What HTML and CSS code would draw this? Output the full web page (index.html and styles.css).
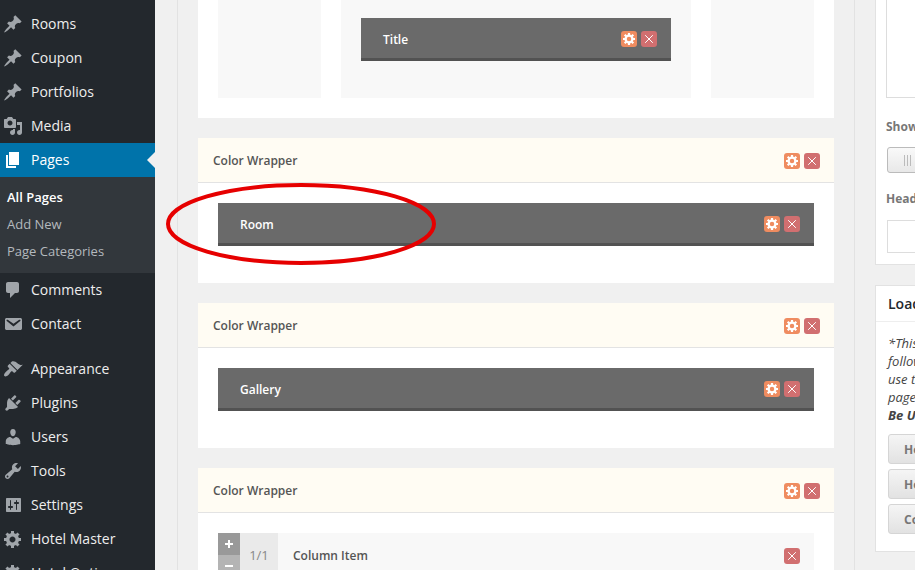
FILE: index.html
```html
<!DOCTYPE html>
<html lang="en">
<head>
<meta charset="utf-8">
<title>Pages</title>
<link rel="stylesheet" href="styles.css">
</head>
<body>
<svg class="defs" aria-hidden="true">
  <symbol id="pin" viewBox="0 0 20 20"><path d="M10.44 3.02l1.82-1.82 6.36 6.35-1.83 1.82c-1.05-.68-2.48-.57-3.41.36l-.75.75c-.92.93-1.04 2.35-.35 3.41l-1.83 1.82-2.41-2.41-2.8 2.79c-.42.42-3.38 2.71-3.8 2.29s1.86-3.39 2.28-3.81l2.79-2.79L4.1 9.36l1.83-1.82c1.05.69 2.48.57 3.4-.36l.75-.75c.93-.92 1.05-2.35.36-3.41z"/></symbol>
  <symbol id="media" viewBox="0 0 20 20"><path d="M13 11V4c0-.55-.45-1-1-1h-1.67L9 1H5L3.67 3H2c-.55 0-1 .45-1 1v7c0 .55.45 1 1 1h10c.55 0 1-.45 1-1zM7 4.5c1.38 0 2.5 1.12 2.5 2.5S8.38 9.5 7 9.5 4.5 8.38 4.5 7 5.62 4.5 7 4.5zM14 6h5v10.5c0 1.38-1.12 2.5-2.5 2.5S14 17.88 14 16.5s1.12-2.5 2.5-2.5c.17 0 .34.02.5.05V9h-3V6zm-4 8.05V13h2v3.5c0 1.38-1.12 2.5-2.5 2.5S7 17.88 7 16.5 8.12 14 9.5 14c.17 0 .34.02.5.05z"/></symbol>
  <symbol id="page" viewBox="0 0 20 20"><path d="M6 15V2h10v13H6zm-1 1h8v2H3V5h2v11z"/></symbol>
  <symbol id="comment" viewBox="0 0 20 20"><path d="M5 2h9c1.1 0 2 .9 2 2v7c0 1.1-.9 2-2 2h-2l-5 5v-5H5c-1.1 0-2-.9-2-2V4c0-1.1.9-2 2-2z"/></symbol>
  <symbol id="email" viewBox="0 0 20 20"><path d="M3.87 4h13.25C18.37 4 19 4.59 19 5.79v8.42c0 1.19-.63 1.79-1.88 1.79H3.87c-1.25 0-1.88-.6-1.88-1.79V5.79c0-1.2.63-1.79 1.88-1.79zm6.62 8.6l6.74-5.53c.24-.2.43-.66.13-1.07-.29-.41-.82-.42-1.17-.17l-5.7 3.86L4.8 5.83c-.35-.25-.88-.24-1.17.17-.3.41-.11.87.13 1.07z"/></symbol>
  <symbol id="brush" viewBox="0 0 20 20"><path d="M14.48 11.06L7.41 3.99l1.5-1.5c.5-.56 2.3-.47 3.51.32 1.21.8 1.43 1.28 2.91 2.1 1.18.64 2.45 1.26 4.45.85zm-.71.71L6.7 4.7 4.93 6.47c-.39.39-.39 1.02 0 1.41l1.06 1.06c.39.39.39 1.03 0 1.42-.6.6-1.43 1.11-2.21 1.69-.35.26-.7.53-1.01.84C1.43 14.23.4 16.08 1.4 17.07c.99 1 2.84-.03 4.18-1.36.31-.31.58-.66.85-1.02.57-.78 1.08-1.61 1.69-2.21.39-.39 1.02-.39 1.41 0l1.06 1.06c.39.39 1.02.39 1.41 0z"/></symbol>
  <symbol id="plug" viewBox="0 0 20 20"><path d="M13.11 4.36L9.87 7.6 8 5.73l3.24-3.24c.35-.34 1.05-.2 1.56.32.52.51.66 1.21.31 1.55zm-8 1.77l.91-1.12 9.01 9.01-1.19.84c-.71.71-2.63 1.16-3.82 1.16H6.14L4.9 17.26c-.59.59-1.54.59-2.12 0-.59-.58-.59-1.53 0-2.12l1.24-1.24v-3.88c0-1.13.4-3.19 1.09-3.89zm7.26 3.97l3.24-3.24c.34-.35 1.04-.21 1.55.31.52.51.66 1.21.31 1.55l-3.24 3.25z"/></symbol>
  <symbol id="user" viewBox="0 0 20 20"><path d="M10 9.25c-2.27 0-2.73-3.44-2.73-3.44C7 4.02 7.82 2 9.97 2c2.16 0 2.98 2.02 2.71 3.81 0 0-.41 3.44-2.68 3.44zm0 2.57L12.72 10c2.39 0 4.52 2.33 4.52 4.53v2.49s-3.65 1.13-7.24 1.13c-3.65 0-7.24-1.13-7.24-1.13v-2.49c0-2.25 1.94-4.48 4.47-4.48z"/></symbol>
  <symbol id="wrench" viewBox="0 0 20 20"><path d="M16.68 9.77c-1.34 1.34-3.3 1.67-4.95.99l-5.41 6.52c-.99.99-2.59.99-3.58 0s-.99-2.59 0-3.57l6.52-5.42c-.68-1.65-.35-3.61.99-4.95 1.28-1.28 3.12-1.62 4.72-1.06l-2.89 2.89 2.82 2.82 2.86-2.87c.53 1.58.18 3.39-1.08 4.65zM3.81 16.21c.4.39 1.04.39 1.43 0 .4-.4.4-1.04 0-1.43-.39-.4-1.03-.4-1.43 0-.39.39-.39 1.03 0 1.43z"/></symbol>
  <symbol id="sliders" viewBox="0 0 20 20"><path d="M18 16V4c0-.6-.4-1-1-1H4c-.6 0-1 .4-1 1v12c0 .6.4 1 1 1h13c.6 0 1-.4 1-1zM8 11h1c.55 0 1 .45 1 1s-.45 1-1 1H8v1.5c0 .28-.22.5-.5.5s-.5-.22-.5-.5V13H6c-.55 0-1-.45-1-1s.45-1 1-1h1V5.5c0-.28.22-.5.5-.5s.5.22.5.5V11zm5-2h-1c-.55 0-1-.45-1-1s.45-1 1-1h1V5.5c0-.28.22-.5.5-.5s.5.22.5.5V7h1c.55 0 1 .45 1 1s-.45 1-1 1h-1v5.5c0 .28-.22.5-.5.5s-.5-.22-.5-.5V9z"/></symbol>
  <symbol id="gear" viewBox="0 0 20 20"><path d="M18 12h-2.18c-.17.7-.44 1.35-.81 1.93l1.54 1.54-2.1 2.1-1.54-1.54c-.58.36-1.23.63-1.91.79V19H8v-2.18c-.68-.16-1.33-.43-1.91-.79l-1.54 1.54-2.12-2.12 1.54-1.54c-.36-.58-.63-1.23-.79-1.91H1V9.03h2.17c.16-.7.44-1.35.8-1.94L2.43 5.55l2.1-2.1 1.54 1.54c.58-.37 1.24-.64 1.93-.81V2h3v2.18c.68.16 1.33.43 1.91.79l1.54-1.54 2.12 2.12-1.54 1.54c.36.59.64 1.24.8 1.94H18V12zm-8.5 1.5c1.66 0 3-1.34 3-3s-1.34-3-3-3-3 1.34-3 3 1.34 3 3 3z"/></symbol>
  <symbol id="cog" viewBox="0 0 16 16"><g fill="none" stroke="#fff"><circle cx="8" cy="8" r="3.4" stroke-width="2.3"/><path stroke-width="2.2" d="M8 4V2M8 12v2M4 8H2M12 8h2M5.200 5.200L3.700 3.700M10.800 5.200l1.500-1.500M5.200 10.800l-1.500 1.500M10.800 10.800l1.500 1.500"/></g></symbol>
  <symbol id="cross" viewBox="0 0 16 16"><path fill="none" stroke="#fff" d="M4.200 4.200l7.600 7.600M11.800 4.200l-7.600 7.600"/></symbol>
</svg>

<div class="screen">
  <nav class="menu" aria-label="Main menu">
    <a class="item" href="#"><svg><use href="#pin"/></svg>Rooms</a>
    <a class="item" href="#"><svg><use href="#pin"/></svg>Coupon</a>
    <a class="item" href="#"><svg><use href="#pin"/></svg>Portfolios</a>
    <a class="item" href="#"><svg><use href="#media"/></svg>Media</a>
    <a class="item current" href="#"><svg><use href="#page"/></svg>Pages</a>
    <div class="submenu">
      <a class="active" href="#">All Pages</a>
      <a href="#">Add New</a>
      <a href="#">Page Categories</a>
    </div>
    <a class="item" href="#"><svg><use href="#comment"/></svg>Comments</a>
    <a class="item" href="#"><svg><use href="#email"/></svg>Contact</a>
    <div class="separator"></div>
    <a class="item" href="#"><svg><use href="#brush"/></svg>Appearance</a>
    <a class="item" href="#"><svg><use href="#plug"/></svg>Plugins</a>
    <a class="item" href="#"><svg><use href="#user"/></svg>Users</a>
    <a class="item" href="#"><svg><use href="#wrench"/></svg>Tools</a>
    <a class="item" href="#"><svg><use href="#sliders"/></svg>Settings</a>
    <a class="item" href="#"><svg><use href="#gear"/></svg>Hotel Master</a>
    <a class="item" href="#"><svg><use href="#gear"/></svg>Hotel Options</a>
  </nav>

  <main class="builder">
    <section class="wrapper">
      <div class="columns">
        <div class="column"></div>
        <div class="column">
          <div class="module">
            <span>Title</span>
            <button class="tool edit" aria-label="Edit"><svg><use href="#cog"/></svg></button>
            <button class="tool delete" aria-label="Delete"><svg><use href="#cross"/></svg></button>
          </div>
        </div>
        <div class="column"></div>
      </div>
    </section>

    <section class="wrapper">
      <header class="wrapper-head">
        <span>Color Wrapper</span>
        <button class="tool edit" aria-label="Edit"><svg><use href="#cog"/></svg></button>
        <button class="tool delete" aria-label="Delete"><svg><use href="#cross"/></svg></button>
      </header>
      <div class="wrapper-body">
        <div class="module">
          <span>Room</span>
          <button class="tool edit" aria-label="Edit"><svg><use href="#cog"/></svg></button>
          <button class="tool delete" aria-label="Delete"><svg><use href="#cross"/></svg></button>
          <svg class="highlight" viewBox="0 0 270 82"><ellipse cx="135" cy="41" rx="133" ry="39"/></svg>
        </div>
      </div>
    </section>

    <section class="wrapper">
      <header class="wrapper-head">
        <span>Color Wrapper</span>
        <button class="tool edit" aria-label="Edit"><svg><use href="#cog"/></svg></button>
        <button class="tool delete" aria-label="Delete"><svg><use href="#cross"/></svg></button>
      </header>
      <div class="wrapper-body">
        <div class="module">
          <span>Gallery</span>
          <button class="tool edit" aria-label="Edit"><svg><use href="#cog"/></svg></button>
          <button class="tool delete" aria-label="Delete"><svg><use href="#cross"/></svg></button>
        </div>
      </div>
    </section>

    <section class="wrapper">
      <header class="wrapper-head">
        <span>Color Wrapper</span>
        <button class="tool edit" aria-label="Edit"><svg><use href="#cog"/></svg></button>
        <button class="tool delete" aria-label="Delete"><svg><use href="#cross"/></svg></button>
      </header>
      <div class="wrapper-body">
        <div class="column-item">
          <div class="resize">
            <button class="grow" aria-label="Wider"><svg viewBox="0 0 22 22"><path d="M7 11h8M11 7v8"/></svg></button>
            <button class="shrink" aria-label="Narrower"><svg viewBox="0 0 22 22"><path d="M7 11h8"/></svg></button>
          </div>
          <div class="size">1/1</div>
          <div class="column-head">
            <span>Column Item</span>
            <button class="tool delete" aria-label="Delete"><svg><use href="#cross"/></svg></button>
          </div>
        </div>
      </div>
    </section>
  </main>

  <aside class="side">
    <section class="box options">
      <textarea class="notes" aria-label="Notes"></textarea>
      <span class="label">Show</span>
      <button class="switch" aria-label="Show"><svg viewBox="0 0 8 11"><path d="M.5 0v11M3.500 0v11M6.500 0v11"/></svg></button>
      <label class="label" for="head">Header</label>
      <input class="field" id="head" type="text">
    </section>
    <section class="box">
      <h2>Load</h2>
      <div class="loader">
        <p>*This<br>follow<br>use the<br>page<br><b>Be Used</b></p>
        <button class="load">Home</button>
        <button class="load">Home</button>
        <button class="load">Contact</button>
      </div>
    </section>
  </aside>
</div>
</body>
</html>
```

FILE: styles.css
```css
* { box-sizing: border-box; }

body {
  margin: 0;
  background: #f0f0f0;
  color: #555;
  font-family: "Open Sans", sans-serif;
  font-size: 12px;
  line-height: 18px;
}

button, input, textarea { font: inherit; margin: 0; }

.defs { display: none; }

.screen {
  display: flex;
  height: 100vh;
  overflow: hidden;
}

/* Admin menu */
.menu {
  flex: 0 0 155px;
  padding-top: 7px;
  background: #23282d;
}

.item {
  display: flex;
  align-items: center;
  gap: 8px;
  height: 34px;
  padding-left: 3px;
  color: #eee;
  font-size: 14px;
  font-weight: 500;
  text-decoration: none;
  white-space: nowrap;
}

.item svg {
  width: 20px;
  height: 20px;
  fill: #a0a5aa;
}

.item.current {
  background: #0073aa;
  color: #fff;
}

.item.current svg { fill: #fff; }

.item.current::after {
  content: "";
  margin-left: auto;
  border: 8px solid transparent;
  border-left: 0;
  border-right-color: #f0f0f0;
}

.submenu {
  padding: 7px 0 8px;
  background: #32373c;
}

.submenu a {
  display: block;
  padding-left: 7px;
  color: #b4b9be;
  font-size: 13px;
  line-height: 27px;
  text-decoration: none;
}

.submenu .active {
  color: #fff;
  font-weight: 600;
}

.separator { height: 11px; }

/* Page builder */
.builder {
  flex: 1;
  display: flex;
  flex-direction: column;
  gap: 20px;
  min-width: 0;
  margin: 0 20px 0 22px;
  padding: 0 20px;
  border: solid #e2e2e2;
  border-width: 0 1px;
}

.wrapper {
  flex: none;
  background: #fff;
}

.columns {
  display: grid;
  grid-template-columns: 103fr 350fr 103fr;
  gap: 20px;
  padding: 0 20px 20px;
}

.column {
  padding: 18px 20px 37px;
  background: #f8f8f8;
}

.wrapper-head {
  display: flex;
  align-items: center;
  gap: 4px;
  height: 45px;
  padding: 2px 14px 0 15px;
  border-bottom: 1px solid #e3e3e3;
  background: #fffcf3;
  font-weight: 600;
}

.wrapper-body { padding: 20px 20px 37px; }

.wrapper-head span, .module span, .column-head span { flex: 1; }

.module {
  position: relative;
  display: flex;
  align-items: center;
  gap: 4px;
  height: 43px;
  padding: 2px 14px 0 22px;
  border-bottom: 3px solid #525252;
  background: #6a6a6a;
  color: #fff;
  font-weight: 600;
}

.module span { padding-top: 2px; }

.tool {
  flex: none;
  width: 16px;
  height: 16px;
  padding: 0;
  border: 0;
  border-radius: 3px;
}

.tool svg {
  display: block;
  width: 16px;
  height: 16px;
}

.edit { background: #ef8c60; }
.delete { background: #d16f70; }

.highlight {
  position: absolute;
  top: -20px;
  left: -52px;
  z-index: 1;
  width: 270px;
  height: 82px;
  fill: none;
  stroke: #e60000;
  stroke-width: 4;
  pointer-events: none;
}

.column-item {
  display: flex;
  height: 44px;
  background: #f8f8f8;
}

.resize { width: 22px; }

.resize button {
  display: block;
  width: 22px;
  height: 22px;
  padding: 0;
  border: 0;
}

.resize svg {
  display: block;
  stroke: #fff;
  stroke-width: 2;
}

.grow { background: #999; }
.shrink { background: #b4b4b4; }

.size {
  width: 38px;
  background: #eaeaea;
  color: #888;
  font-size: 13px;
  line-height: 44px;
  text-align: center;
}

.column-head {
  flex: 1;
  display: flex;
  align-items: center;
  padding: 2px 14px 0 15px;
  font-weight: 600;
}

/* Option boxes, cut off by the window's right edge */
.side {
  flex: 0 0 40px;
  overflow: hidden;
}

.box {
  width: 280px;
  margin-bottom: 20px;
  border: 1px solid #e2e2e2;
  background: #fff;
}

.options {
  display: flex;
  flex-direction: column;
  align-items: flex-start;
  padding: 0 10px 11px;
  border-top: 0;
}

.notes {
  width: 100%;
  height: 98px;
  margin-bottom: 20px;
  border: 1px solid #ddd;
  border-top: 0;
  background: #fff;
  resize: none;
}

.label {
  color: #777;
  font-weight: 700;
}

.switch {
  width: 76px;
  height: 26px;
  margin: 11px 0 17px 1px;
  padding: 0 16px;
  border: 1px solid #bbb;
  border-radius: 3px;
  background: linear-gradient(#f9f9f9, #e8e8e8);
}

.switch svg {
  display: block;
  width: 8px;
  height: 11px;
  stroke: #bbb;
}

.field {
  width: 200px;
  height: 33px;
  margin: 12px 0 0 1px;
  border: 1px solid #ddd;
  background: #fff;
}

.box h2 {
  margin: 0;
  padding: 0 12px;
  border-bottom: 1px solid #eee;
  color: #23282d;
  font-size: 14px;
  font-weight: 600;
  line-height: 35px;
}

.loader {
  display: flex;
  flex-direction: column;
  align-items: flex-start;
  gap: 5px;
  padding: 12px 12px 17px;
}

.loader p {
  margin: 0 0 5px;
  color: #444;
  font-size: 13px;
  font-style: italic;
}

.load {
  height: 30px;
  padding: 2px 15px 0;
  border: 1px solid #d5d5d5;
  border-radius: 3px;
  background: linear-gradient(#f5f5f5, #e2e2e2);
  color: #777;
  font-weight: 700;
}
```
